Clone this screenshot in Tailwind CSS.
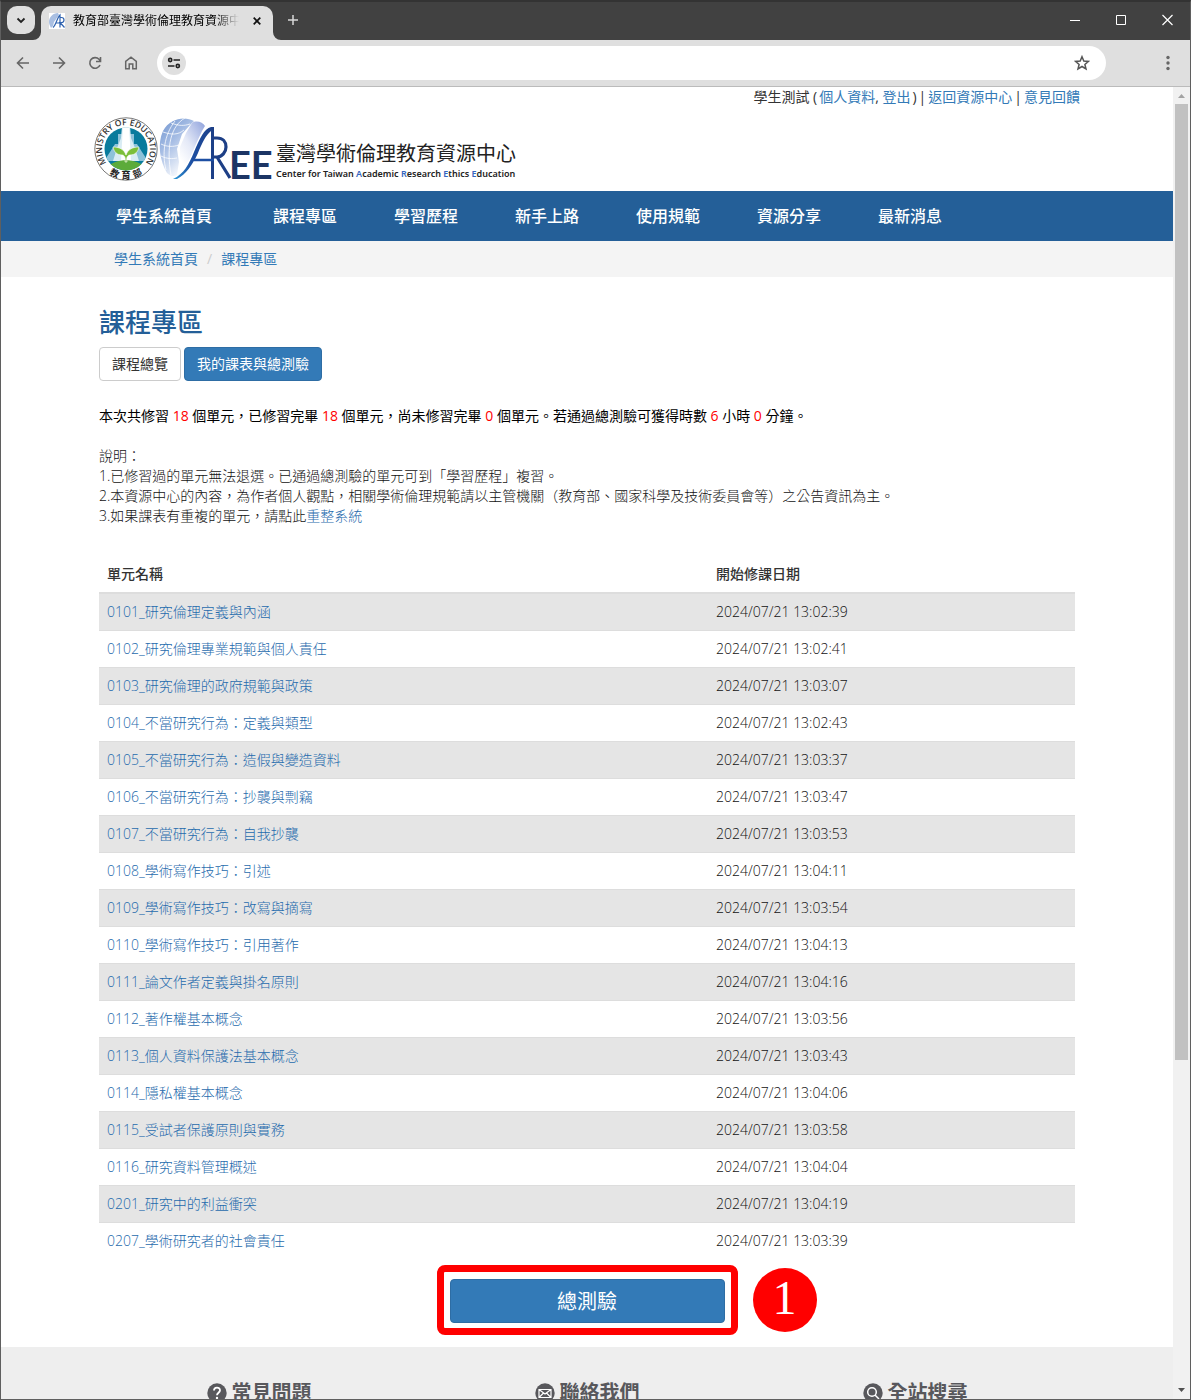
<!DOCTYPE html>
<html lang="zh-Hant">
<head>
<meta charset="utf-8">
<title>教育部臺灣學術倫理教育資源中心</title>
<script src="https://cdn.jsdelivr.net/npm/@tailwindcss/browser@4"></script>
</head>
<body class="bg-white text-[#333]">
<div class="h-screen flex flex-col overflow-hidden border border-t-2 border-[#5f5f5f] border-t-[#333] font-['Open_Sans','Noto_Sans_CJK_TC',sans-serif] text-sm leading-5">

  <!-- Tab strip -->
  <div class="h-[38px] shrink-0 bg-[#414141] flex items-start">
    <button aria-label="搜尋分頁" class="ml-1.5 mt-1 size-7 shrink-0 rounded-[10px] bg-[#dfdfdf] flex items-center justify-center">
      <svg width="10" height="7" viewBox="0 0 10 7" fill="none" stroke="#222" stroke-width="1.8"><path d="M1.5 1.5 5 5l3.5-3.5"/></svg>
    </button>
    <div class="relative ml-1.5 mt-1 h-[34px] w-[232px] shrink-0 rounded-t-[10px] bg-[#dfdfdf] flex items-center pb-1 pl-2 pr-2.5">
      <svg class="shrink-0" width="16" height="16" viewBox="0 0 16 16" fill="none">
        <path fill="#fff" d="M0 0h16v16H0z"/><path fill="#a9bfe2" d="M0 9C0 4 4 0 9 0l1 2-5 7-1 4-2 2C1 13 0 11 0 9z"/>
        <path stroke="#2f63b0" stroke-width="1.2" d="M4 14.5C7 12 8 5 11 2v12.5M6.5 10H11M11 4.5h1.500a2 2 0 0 1 0 5H11l4.500 5"/>
      </svg>
      <span class="ml-2 flex-1 overflow-hidden whitespace-nowrap text-xs leading-5 text-black [mask-image:linear-gradient(to_right,black_85%,transparent)]">教育部臺灣學術倫理教育資源中心</span>
      <button aria-label="關閉分頁" class="ml-3 size-3 flex items-center justify-center"><svg width="8" height="8" viewBox="0 0 8 8" stroke="#111" stroke-width="1.7"><path d="m.7.7 6.600 6.600M7.300.7.7 7.300"/></svg></button>
      <svg class="absolute -left-2 bottom-0" width="8" height="8" viewBox="0 0 8 8"><path fill="#dfdfdf" d="M8 0v8H0a8 8 0 0 0 8-8z"/></svg>
      <svg class="absolute -right-2 bottom-0" width="8" height="8" viewBox="0 0 8 8"><path fill="#dfdfdf" d="M0 0v8h8a8 8 0 0 1-8-8z"/></svg>
    </div>
    <button aria-label="新分頁" class="ml-3.5 mt-3 size-3"><svg width="12" height="12" viewBox="0 0 12 12" stroke="#d8d8d8" stroke-width="1.500"><path d="M6 1v10M1 6h10"/></svg></button>
    <div class="ml-auto mr-[17px] mt-3 flex gap-9">
      <button aria-label="最小化"><svg width="10" height="12" viewBox="0 0 10 12" stroke="#fff"><path d="M0 6.500h10"/></svg></button>
      <button aria-label="最大化"><svg width="10" height="12" viewBox="0 0 10 12" fill="none" stroke="#fff"><path d="M.5 1.500h9v9h-9z"/></svg></button>
      <button aria-label="關閉"><svg width="11" height="12" viewBox="0 0 11 12" stroke="#fff" stroke-width="1.200"><path d="m.5 1 10 10M10.500 1l-10 10"/></svg></button>
    </div>
  </div>

  <!-- Toolbar -->
  <div class="h-[47px] shrink-0 bg-[#dfdfdf] border-b border-[#bbb] flex items-center pl-3.5 pr-[15px]">
    <div class="flex gap-5">
      <button aria-label="上一頁" class="size-4"><svg width="16" height="16" viewBox="0 0 16 16" fill="none" stroke="#666" stroke-width="1.600"><path d="M14 8H3M8 2.500 2.500 8 8 13.500"/></svg></button>
      <button aria-label="下一頁" class="size-4"><svg width="16" height="16" viewBox="0 0 16 16" fill="none" stroke="#666" stroke-width="1.600"><path d="M2 8h11M8 2.500 13.500 8 8 13.500"/></svg></button>
      <button aria-label="重新載入" class="size-4"><svg width="16" height="16" viewBox="0 0 16 16" fill="none" stroke="#666" stroke-width="1.600"><path d="M13 10a5.300 5.300 0 1 1-1-5.700L13.500 6M13.500 2v4.500H9"/></svg></button>
      <button aria-label="首頁" class="size-4"><svg width="16" height="16" viewBox="0 0 16 16" fill="none" stroke="#666" stroke-width="1.500"><path d="M2.700 6.300 8 2.200l5.300 4.100v7.500H9.800V9H6.200v4.800H2.700z"/></svg></button>
    </div>
    <div class="ml-[18px] mr-[55px] h-[34px] flex-1 rounded-full bg-white flex items-center pl-[5px] pr-4">
      <button aria-label="網站資訊" class="size-6 rounded-full bg-[#dfdfdf] flex items-center justify-center">
        <svg width="14" height="12" viewBox="0 0 14 12" fill="none" stroke="#222" stroke-width="1.600"><circle cx="3.200" cy="3" r="1.600"/><path d="M6.500 3H13M1 9h6.500"/><circle cx="10.800" cy="9" r="1.600"/></svg>
      </button>
      <input type="text" aria-label="網址" class="mx-2 flex-1 outline-none bg-transparent">
      <button aria-label="加入書籤" class="size-4"><svg width="16" height="16" viewBox="0 0 16 16" fill="none" stroke="#555" stroke-width="1.500"><path d="m8 1.700 1.800 4.300 4.600.4-3.500 3 1.100 4.600L8 11.500 4 14l1.100-4.600-3.500-3 4.600-.4z"/></svg></button>
    </div>
    <button aria-label="選單" class="w-3.5 flex justify-center"><svg width="4" height="16" viewBox="0 0 4 16" fill="#666"><circle cx="2" cy="2.500" r="1.700"/><circle cx="2" cy="8" r="1.700"/><circle cx="2" cy="13.500" r="1.700"/></svg></button>
  </div>

  <div class="flex-1 min-h-0 flex">
    <div class="flex-1 min-w-0 overflow-hidden">
      <header class="mx-auto max-w-[986px] pb-2.5">
        <div class="flex justify-end gap-0.5 whitespace-nowrap">
          <span>學生測試 (</span><span><a href="#" class="text-[#337ab7]">個人資料</a>, <a href="#" class="text-[#337ab7]">登出</a></span><span>)</span><span>|</span><a href="#" class="text-[#337ab7]">返回資源中心</a><span>|</span><a href="#" class="text-[#337ab7]">意見回饋</a>
        </div>
        <a href="#" class="mt-2.5 flex h-16 w-fit" aria-label="臺灣學術倫理教育資源中心">
          <svg class="overflow-visible" width="64" height="64" viewBox="0 0 64 64">
            <defs>
              <path id="ringTop" d="M15 49A24 24 0 1 1 49 49"/>
              <path id="ringBottom" d="M6 47A30 30 0 0 0 58 47"/>
              <clipPath id="disc"><circle cx="32" cy="32" r="21.500"/></clipPath>
            </defs>
            <circle cx="32" cy="32" r="31.200" fill="#fff" stroke="#555" stroke-width=".8"/>
            <g clip-path="url(#disc)">
              <path fill="#087b9d" d="M8 8h48v48H8z"/>
              <path fill="#8dc2d9" d="M24 17h7v27H10l6-9 5-8h3zM33 17h7v10h3l5 8 6 9H33z"/>
              <path fill="#d9ecf4" d="m28 9 8 0 1 12 4 10 4 13H19l4-13 4-10z"/>
              <path fill="#fff" d="M29 8h6l2 36H27z"/>
              <path fill="#5cab3a" d="M14 50c6-9 30-9 36 0l-8 8H22z"/>
            </g>
            <path fill="#7cbf3a" stroke="#fff" stroke-width=".6" d="M31 45c1-5-1-7-3-7-5 0-8-3-9-8 6 0 11 2 13 8 2-6 7-8 13-8-1 5-4 8-9 8-2 0-4 2-3 7z"/>
            <text font-family="Open Sans" font-size="8.500" font-weight="600" fill="#333"><textPath href="#ringTop" startOffset="50%" text-anchor="middle">MINISTRY OF EDUCATION</textPath></text>
            <text font-family="Noto Sans CJK TC" font-size="9" font-weight="700" fill="#222"><textPath href="#ringBottom" startOffset="50%" text-anchor="middle">教 &#160;育 &#160;部</textPath></text>
          </svg>
          <svg class="overflow-visible" width="118" height="64" viewBox="0 0 118 64">
            <defs>
              <linearGradient id="globe" x1="0" y1="0" x2=".6" y2="1"><stop offset="0" stop-color="#6f94cf"/><stop offset=".45" stop-color="#a6bde4"/><stop offset="1" stop-color="#fff"/></linearGradient>
              <linearGradient id="island" x1="1" y1="0" x2=".2" y2="1"><stop offset="0" stop-color="#8fa2dc"/><stop offset=".6" stop-color="#e4e9f7"/><stop offset="1" stop-color="#fff"/></linearGradient>
              <linearGradient id="mark" x1="0" x2="1"><stop offset="0" stop-color="#2e9bd8"/><stop offset=".45" stop-color="#1d4fa3"/><stop offset="1" stop-color="#1d3f86"/></linearGradient>
            </defs>
            <path fill="url(#globe)" d="M36 4C27-1 12 1 5 14-1 27 2 44 9 56c3 3 7 4 10 2l2-13-2-13 5-15 8-9z"/>
            <g fill="none" stroke="#fff" stroke-width=".9" opacity=".85"><path d="M5 15c9 3 15 3 21-2M3 27c6 3 12 3 18 1M3 39c6 3 11 3 16 2M27 1C13 9 8 29 13 58M13 6c8 3 13 3 19 1M17 4C6 18 4 37 8 53"/></g>
            <path fill="url(#island)" d="M34 6c4-3 11-1 13 3l-3 5-6 13-7 16-5 7-4-8 0-12 6-14z"/>
            <path fill="url(#mark)" d="M15 62c11-5 16-15 21-27 6-14 10-23 17-25h3v52h-3V14c-5 4-9 12-13 22-6 13-12 21-21 26z"/>
            <path fill="none" stroke="#1d4fa3" stroke-width="2.500" d="M36 43h20"/>
            <path fill="none" stroke="#1d3f86" stroke-width="3.200" d="M55 21h4c6 0 9 4 9 9s-4 10-9 10h-3m3 0 13 21"/>
            <text x="71" y="62" font-family="Lato" font-size="38" font-weight="700" fill="#1c3564">EE</text>
          </svg>
          <span class="flex flex-col pt-[27px] whitespace-nowrap">
            <span class="text-xl leading-5 text-[#222]">臺灣學術倫理教育資源中心</span>
            <span class="text-[9px] leading-5 font-semibold text-[#222] font-['Noto_Sans',sans-serif]">Center for Taiwan <b class="font-semibold text-[#3565c0]">A</b>cademic <b class="font-semibold text-[#3565c0]">R</b>esearch <b class="font-semibold text-[#3565c0]">E</b>thics <b class="font-semibold text-[#3565c0]">E</b>ducation</span>
          </span>
        </a>
      </header>

      <nav class="bg-[#245f98] text-base font-medium text-white">
        <div class="mx-auto max-w-[976px] h-[50px] flex items-center gap-[57px] pl-[17px] whitespace-nowrap">
          <a href="#" class="pr-1">學生系統首頁</a><a href="#">課程專區</a><a href="#">學習歷程</a><a href="#">新手上路</a><a href="#">使用規範</a><a href="#">資源分享</a><a href="#">最新消息</a>
        </div>
      </nav>
      <div class="bg-[#f4f4f4]">
        <div class="mx-auto max-w-[976px] h-9 flex items-center gap-[9px] pl-[15px] text-[#337ab7]">
          <a href="#">學生系統首頁</a><span class="text-[#ccc]">/</span><a href="#">課程專區</a>
        </div>
      </div>

      <main class="mx-auto max-w-[976px] pt-[30px] pb-3">
        <h1 class="text-[26px] leading-[30px] font-medium text-[#245f98]">課程專區</h1>
        <div class="mt-2.5 flex gap-[3px]">
          <button class="h-[34px] rounded border border-[#ccc] bg-white px-3">課程總覽</button>
          <button class="h-[34px] rounded border border-[#2e6da4] bg-[#337ab7] px-3 text-white">我的課表與總測驗</button>
        </div>
        <p class="mt-[25px] text-black">本次共修習 <span class="text-[#f00]">18</span> 個單元，已修習完畢 <span class="text-[#f00]">18</span> 個單元，尚未修習完畢 <span class="text-[#f00]">0</span> 個單元。若通過總測驗可獲得時數 <span class="text-[#f00]">6</span> 小時 <span class="text-[#f00]">0</span> 分鐘。</p>
        <p class="mt-5 font-light text-[#111]">說明：<br>1.已修習過的單元無法退選。已通過總測驗的單元可到「學習歷程」複習。<br>2.本資源中心的內容，為作者個人觀點，相關學術倫理規範請以主管機關（教育部、國家科學及技術委員會等）之公告資訊為主。<br>3.如果課表有重複的單元，請點此<a href="#" class="text-[#1f6bad]">重整系統</a></p>

        <table class="mt-[29px] w-full border-separate border-spacing-0 text-left font-light text-[#111] [&_td]:px-2 [&_td]:h-[37px] [&_td]:border-t [&_td]:border-[#ddd] [&_tbody_tr:nth-child(odd)]:bg-[#e5e5e5] [&_tbody_tr:first-child_td]:border-t-0 [&_tbody_tr:first-child_td]:h-9 [&_a]:text-[#1f6bad]">
          <thead><tr class="text-[#333]"><th class="h-[39px] w-[62.4%] border-b-2 border-[#ddd] px-2 font-medium">單元名稱</th><th class="h-[39px] border-b-2 border-[#ddd] px-2 font-medium">開始修課日期</th></tr></thead>
          <tbody>
            <tr><td><a href="#">0101_研究倫理定義與內涵</a></td><td>2024/07/21 13:02:39</td></tr>
            <tr><td><a href="#">0102_研究倫理專業規範與個人責任</a></td><td>2024/07/21 13:02:41</td></tr>
            <tr><td><a href="#">0103_研究倫理的政府規範與政策</a></td><td>2024/07/21 13:03:07</td></tr>
            <tr><td><a href="#">0104_不當研究行為：定義與類型</a></td><td>2024/07/21 13:02:43</td></tr>
            <tr><td><a href="#">0105_不當研究行為：造假與變造資料</a></td><td>2024/07/21 13:03:37</td></tr>
            <tr><td><a href="#">0106_不當研究行為：抄襲與剽竊</a></td><td>2024/07/21 13:03:47</td></tr>
            <tr><td><a href="#">0107_不當研究行為：自我抄襲</a></td><td>2024/07/21 13:03:53</td></tr>
            <tr><td><a href="#">0108_學術寫作技巧：引述</a></td><td>2024/07/21 13:04:11</td></tr>
            <tr><td><a href="#">0109_學術寫作技巧：改寫與摘寫</a></td><td>2024/07/21 13:03:54</td></tr>
            <tr><td><a href="#">0110_學術寫作技巧：引用著作</a></td><td>2024/07/21 13:04:13</td></tr>
            <tr><td><a href="#">0111_論文作者定義與掛名原則</a></td><td>2024/07/21 13:04:16</td></tr>
            <tr><td><a href="#">0112_著作權基本概念</a></td><td>2024/07/21 13:03:56</td></tr>
            <tr><td><a href="#">0113_個人資料保護法基本概念</a></td><td>2024/07/21 13:03:43</td></tr>
            <tr><td><a href="#">0114_隱私權基本概念</a></td><td>2024/07/21 13:04:06</td></tr>
            <tr><td><a href="#">0115_受試者保護原則與實務</a></td><td>2024/07/21 13:03:58</td></tr>
            <tr><td><a href="#">0116_研究資料管理概述</a></td><td>2024/07/21 13:04:04</td></tr>
            <tr><td><a href="#">0201_研究中的利益衝突</a></td><td>2024/07/21 13:04:19</td></tr>
            <tr><td><a href="#">0207_學術研究者的社會責任</a></td><td>2024/07/21 13:03:39</td></tr>
          </tbody>
        </table>

        <div class="relative mx-auto mt-1.5 h-[70px] w-[301px] rounded-lg border-[7px] border-[#f00] px-1.5 pt-[7px] flex items-start">
          <button class="h-11 flex-1 rounded border border-[#2e6da4] bg-[#337ab7] pt-0.5 text-xl leading-6 text-white">總測驗</button>
          <span class="absolute left-full -top-1 ml-[22px] size-16 rounded-full bg-[#f00] flex items-center justify-center pb-1 font-['Liberation_Serif',serif] text-[48px] leading-none text-white">1</span>
        </div>
      </main>

      <footer class="bg-[#eee] h-40 pt-9 text-xl leading-5 font-bold text-[#58585c]">
        <div class="mx-auto max-w-[984px] grid grid-cols-3">
          <h2 class="flex items-center justify-center gap-[5px]"><svg width="20" height="20" viewBox="0 0 20 20"><circle cx="10" cy="10" r="9.700" fill="#58585c"/><path fill="none" stroke="#fff" stroke-width="1.800" d="M7 7.500C7 3.500 13 3.700 13 7.200c0 2.500-3 2.500-3 5"/><circle cx="10" cy="15" r="1.200" fill="#fff"/></svg>常見問題</h2>
          <h2 class="flex items-center justify-center gap-[5px]"><svg width="20" height="20" viewBox="0 0 20 20" fill="none" stroke="#fff" stroke-width="1.200"><circle cx="10" cy="10" r="9.700" fill="#58585c" stroke="none"/><path d="M4 6.500h12v8H4zM4 6.500l6 4.500 6-4.500M4 14.500l4.500-4.500M16 14.500 11.500 10"/></svg>聯絡我們</h2>
          <h2 class="flex items-center justify-center gap-[5px]"><svg width="20" height="20" viewBox="0 0 20 20" fill="none" stroke="#fff" stroke-width="1.500"><circle cx="10" cy="10" r="9.700" fill="#58585c" stroke="none"/><circle cx="9" cy="9" r="4.300"/><path d="m12 12 4 4"/></svg>全站搜尋</h2>
        </div>
      </footer>
    </div>

    <!-- Scrollbar -->
    <div class="w-[17px] shrink-0 bg-[#f1f1f1] flex flex-col items-center">
      <svg class="shrink-0" width="17" height="17" viewBox="0 0 17 17"><path fill="#a3a3a3" d="m5 11 3.500-4 3.500 4z"/></svg>
      <div class="w-[13px] grow-[956] bg-[#c1c1c1]"></div>
      <div class="grow-[322]"></div>
      <svg class="shrink-0" width="17" height="17" viewBox="0 0 17 17"><path fill="#505050" d="m5 6 3.500 4L12 6z"/></svg>
    </div>
  </div>
</div>
</body>
</html>
